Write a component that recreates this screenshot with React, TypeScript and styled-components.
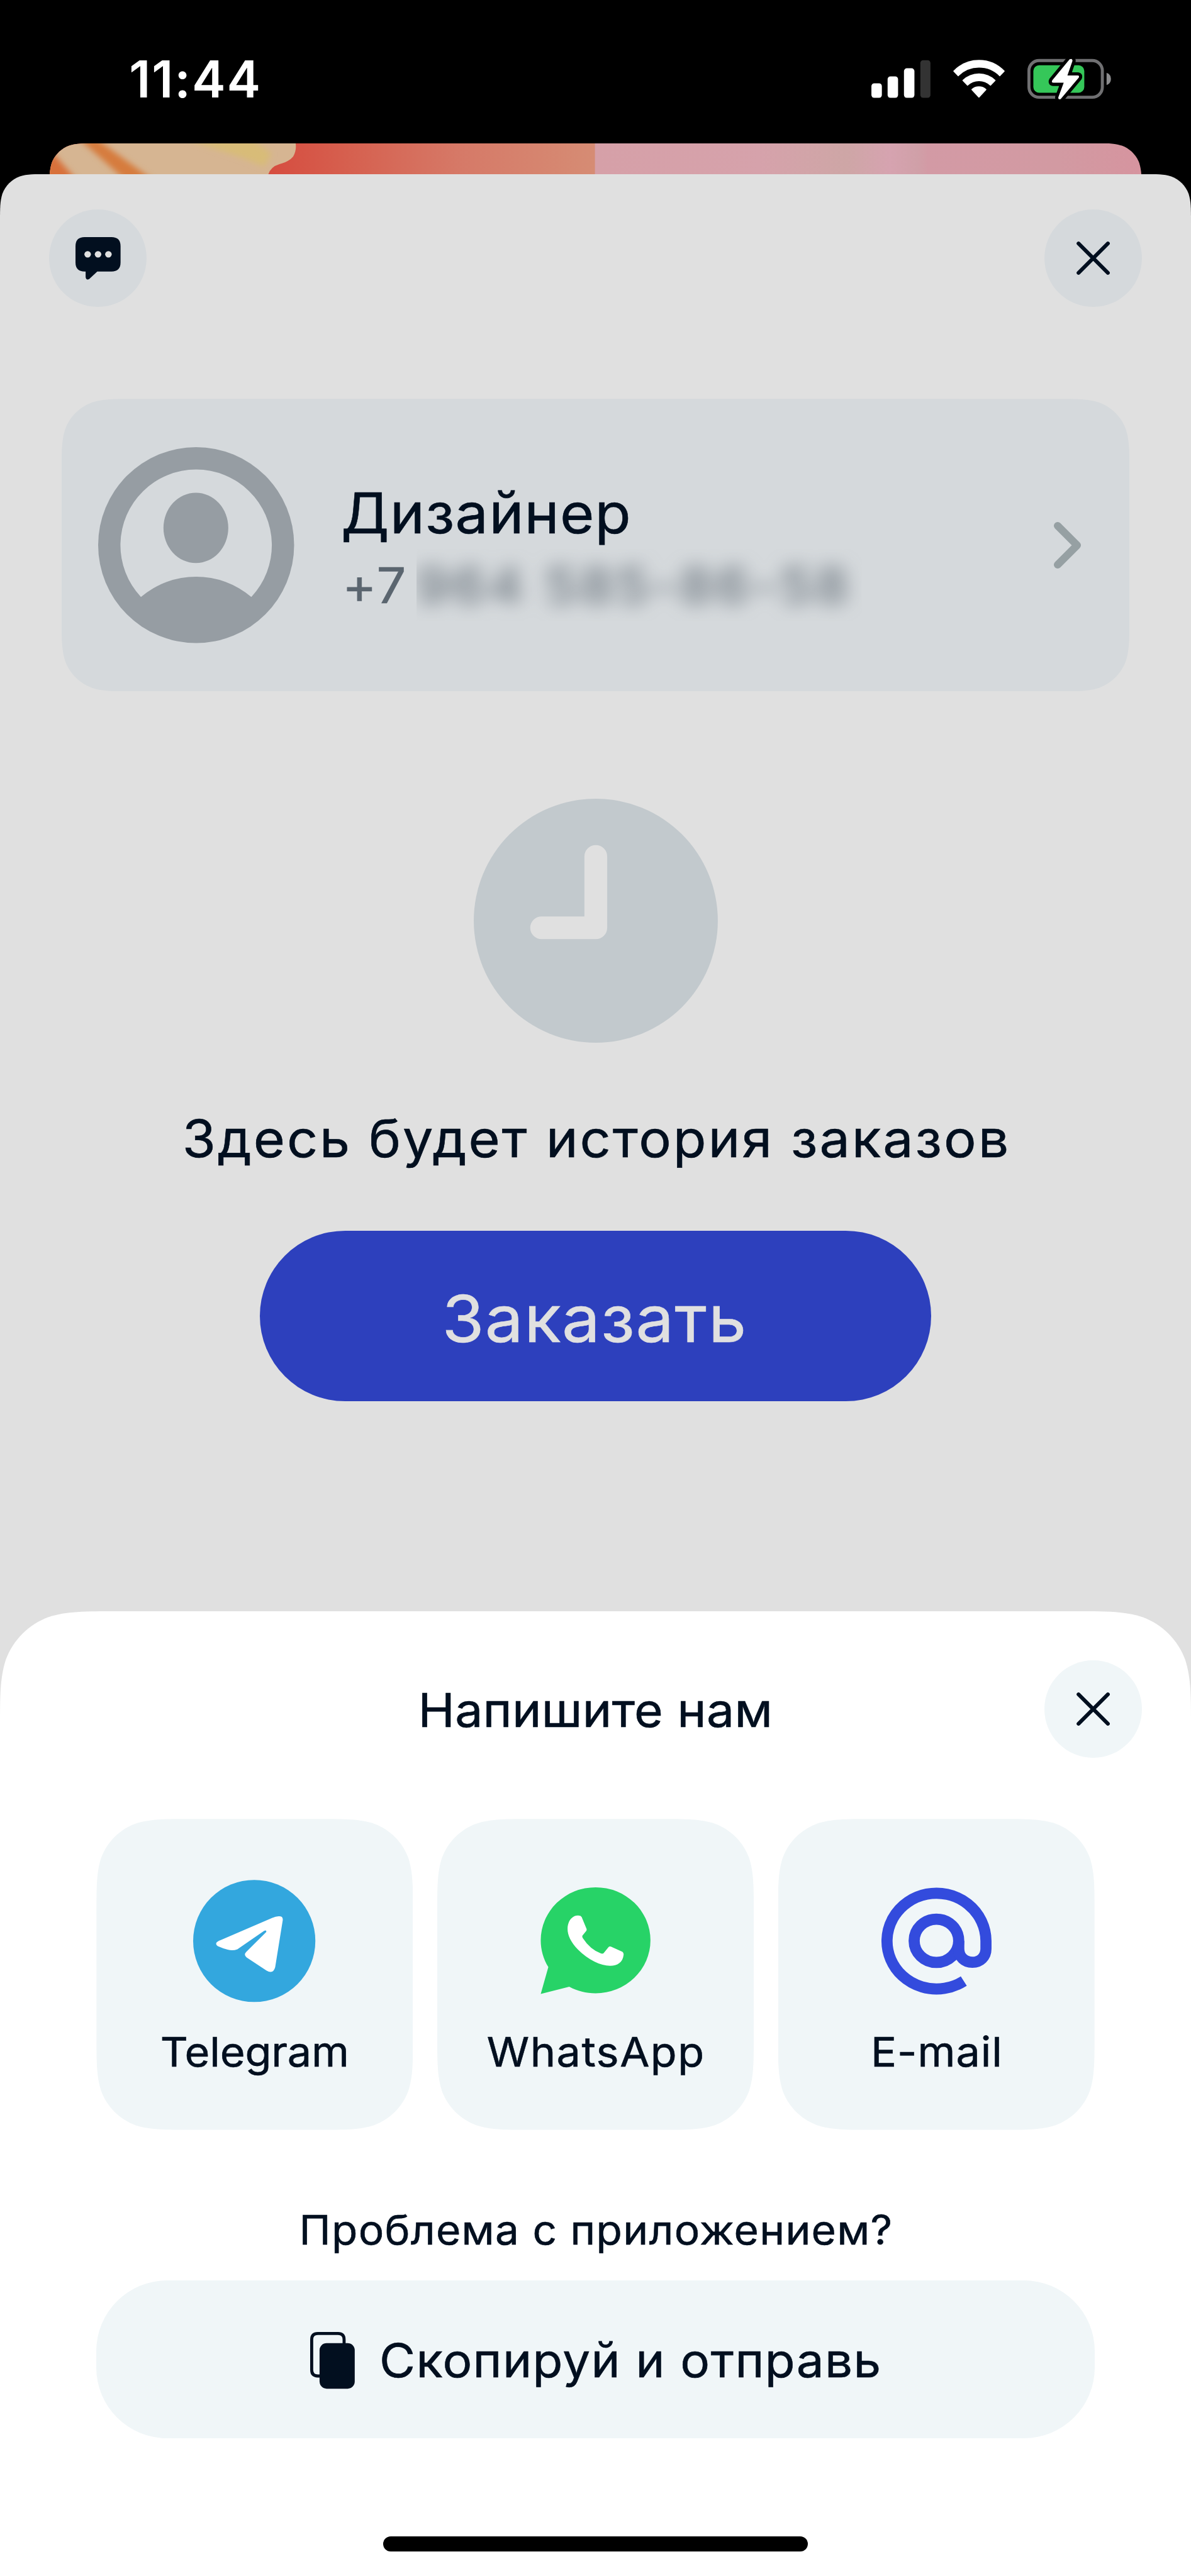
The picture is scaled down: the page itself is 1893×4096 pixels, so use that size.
import React from "react";
import styled, { createGlobalStyle } from "styled-components";

/* The layout is drawn on a 2352-unit-wide artboard and scaled to the viewport. */
const SCALE = 1893 / 2352;
const n = (v: number) => +(v * SCALE).toFixed(2);
const u = (v: number) => `${n(v)}px`;

const ink = "#020f1f";
const muted = "#5a656f";
const tint = "#f0f6f8";
const tintDim = "#d5d9dc";
const dim = "#e0e0e0";

/* Continuous-corner outline; only the top corners are rounded when `open` is set. */
const smooth = (w: number, h: number, r: number, open = false) => {
  const W = n(w);
  const H = n(h);
  const R = n(r);
  const [a, b, c, d, e, f, g] = [1.528665, 1.088493, 0.868407, 0.631494, 0.372824, 0.16906, 0.074911].map((q) => q * R);
  const top = `M${a} 0 L${W - a} 0 C${W - b} 0 ${W - c} 0 ${W - d} ${g} C${W - e} ${f} ${W - f} ${e} ${W - g} ${d} C${W} ${c} ${W} ${b} ${W} ${a}`;
  const bottom = open
    ? `L${W} ${H} L0 ${H}`
    : `L${W} ${H - a} C${W} ${H - b} ${W} ${H - c} ${W - g} ${H - d} C${W - f} ${H - e} ${W - e} ${H - f} ${W - d} ${H - g} C${W - c} ${H} ${W - b} ${H} ${W - a} ${H} L${a} ${H} C${b} ${H} ${c} ${H} ${d} ${H - g} C${e} ${H - f} ${f} ${H - e} ${g} ${H - d} C0 ${H - c} 0 ${H - b} 0 ${H - a}`;
  return `path("${top} ${bottom} L0 ${a} C0 ${b} 0 ${c} ${g} ${d} C${f} ${e} ${e} ${f} ${d} ${g} C${c} 0 ${b} 0 ${a} 0 Z")`;
};

const Global = createGlobalStyle`
  * { box-sizing: border-box; }
  html, body { margin: 0; padding: 0; background: #000; }
  body { font-family: "Inter", "Noto Sans", sans-serif; color: ${ink}; }
  button { font: inherit; color: inherit; border: 0; padding: 0; margin: 0; background: none; }
  svg { display: block; flex: none; overflow: visible; }
`;

const Screen = styled.div`
  display: flex;
  flex-direction: column;
  width: 1893px;
  height: 4096px;
  overflow: hidden;
  background: #000;
`;

const StatusBar = styled.div`
  flex: none;
  display: flex;
  align-items: center;
  justify-content: space-between;
  height: ${u(283)};
  padding: ${u(30)} ${u(158.3)} 0 ${u(255)};
`;

const Time = styled.time`
  font-size: ${u(100)};
  line-height: ${u(120)};
  font-weight: 600;
  letter-spacing: ${u(2.5)};
  color: #fff;
`;

const StatusIcons = styled.div`
  display: flex;
  align-items: center;
  gap: ${u(44.7)};
`;

/* Interface copy is set slightly extended. */
const Text = styled.span<{ $size: number; $line: number; $track?: number; $color?: string; $left?: boolean }>`
  display: block;
  flex: none;
  white-space: pre;
  font-size: ${(p) => u(p.$size)};
  line-height: ${(p) => u(p.$line)};
  letter-spacing: ${(p) => u(p.$track ?? 0)};
  margin-right: ${(p) => u(-(p.$track ?? 0))};
  color: ${(p) => p.$color ?? ink};
  -webkit-text-stroke: 0.6px ${(p) => p.$color ?? ink};
  transform: scaleX(1.05);
  transform-origin: ${(p) => (p.$left ? "left" : "center")} center;
`;

const Peek = styled.div`
  flex: none;
  height: ${u(61)};
  margin: 0 ${u(97.5)};
  overflow: hidden;
  clip-path: ${smooth(2157, 100, 62, true)};
`;

const Sheet = styled.main`
  flex: 1;
  display: flex;
  flex-direction: column;
  background: ${dim};
  clip-path: ${smooth(2352, 4760, 62, true)};
`;

const SheetHeader = styled.header`
  display: flex;
  justify-content: space-between;
  padding: ${u(70)} ${u(97)} 0;
`;

const RoundButton = styled.button<{ $dim?: boolean }>`
  display: flex;
  align-items: center;
  justify-content: center;
  width: ${u(192)};
  height: ${u(192)};
  border-radius: 50%;
  background: ${(p) => (p.$dim ? tintDim : tint)};
`;

const ProfileCard = styled.section`
  display: flex;
  align-items: center;
  width: ${u(2109)};
  height: ${u(578)};
  margin: ${u(182)} auto 0;
  padding: 0 ${u(95)} 0 ${u(72)};
  background: ${tintDim};
  clip-path: ${smooth(2109, 578, 95)};
`;

const ProfileText = styled.div`
  flex: 1;
  display: flex;
  flex-direction: column;
  align-items: flex-start;
  padding: ${u(15)} 0 0 ${u(93)};
`;

const PhoneRow = styled.div`
  display: flex;
  padding-left: ${u(2)};
`;

const HiddenDigits = styled.div`
  width: ${u(880)};
  height: ${u(143)};
  margin-left: ${u(27)};
  overflow: hidden;
  filter: opacity(0.95);

  ${Text} {
    filter: blur(${u(18)});
  }
`;

const Empty = styled.section`
  display: flex;
  flex-direction: column;
  align-items: center;
  padding-top: ${u(212)};
`;

const EmptyTitle = styled.div`
  margin-top: ${u(119)};
`;

const OrderButton = styled.button`
  display: flex;
  align-items: center;
  justify-content: center;
  width: ${u(1326)};
  height: ${u(337.5)};
  margin-top: ${u(111)};
  padding: ${u(12)} ${u(4)} 0 0;
  border-radius: ${u(169)};
  background: #2d40bd;
`;

const ContactSheet = styled.section`
  flex: none;
  display: flex;
  flex-direction: column;
  align-items: center;
  width: ${u(2352)};
  height: ${u(1906)};
  margin-top: auto;
  background: #fff;
  clip-path: ${smooth(2352, 1910, 152, true)};
`;

const ContactHeader = styled.header`
  display: grid;
  grid-template-columns: ${u(192)} 1fr ${u(192)};
  align-items: center;
  justify-items: center;
  width: 100%;
  padding: ${u(97)} ${u(97)} 0;
`;

const ContactTitle = styled.div`
  grid-column: 2;
  padding-top: ${u(5)};
`;

const Tiles = styled.div`
  display: grid;
  grid-template-columns: repeat(3, ${u(625)});
  gap: ${u(48)};
  margin-top: ${u(121.5)};
`;

const Tile = styled.button`
  display: flex;
  flex-direction: column;
  align-items: center;
  height: ${u(614)};
  padding-top: ${u(120)};
  gap: ${u(48.5)};
  background: ${tint};
  clip-path: ${smooth(625, 614, 122)};
`;

const Problem = styled.div`
  margin-top: ${u(138.5)};
`;

const CopyButton = styled.button`
  display: flex;
  align-items: center;
  justify-content: center;
  gap: ${u(73)};
  width: ${u(1972)};
  height: ${u(312)};
  margin-top: ${u(38.5)};
  padding: ${u(6)} ${u(23)} 0 0;
  border-radius: ${u(140)};
  background: ${tint};
`;

const HomeIndicator = styled.div`
  width: ${u(839)};
  height: ${u(30)};
  margin-top: ${u(194)};
  border-radius: ${u(15)};
  background: #000;
`;

const Signal = () => (
  <svg viewBox="62 346 350 244" width={n(116.7)} height={n(81.3)}>
    <rect x="62" y="493" width="62" height="86" rx="17" fill="#fff" />
    <rect x="158" y="452" width="62" height="127" rx="17" fill="#fff" />
    <rect x="255" y="404" width="62" height="175" rx="17" fill="#fff" />
    <rect x="352" y="356" width="60" height="223" rx="17" fill="#333" />
  </svg>
);

const Wifi = () => (
  <svg viewBox="546 346 306 244" width={n(102)} height={n(81.3)}>
    <g fill="#fff" stroke="#fff" strokeWidth="6" strokeLinejoin="round">
      <path d="M550 421A206 206 0 0 1 848 421L822 448A175 175 0 0 0 576 448Z" />
      <path d="M604 476A136 136 0 0 1 794 476L767 504A99 99 0 0 0 631 504Z" />
      <path d="M657 530A62 62 0 0 1 740 530L698.500 575Z" />
    </g>
  </svg>
);

const Battery = () => (
  <svg viewBox="986 346 495 244" width={n(165)} height={n(81.3)}>
    <rect x="995" y="358" width="435" height="218" rx="60" fill="none" stroke="#707072" strokeWidth="18" />
    <path d="M1455 431Q1481 441 1481 467.500Q1481 494 1455 504Z" fill="#8c8c8e" />
    <rect x="1021" y="386" width="302" height="163" rx="34" fill="#35c759" />
    <path
      d="M1236 351L1133 476Q1126 490 1140 490L1201 490L1169 576Q1168 591 1183 587L1290 460Q1296 447 1283 447L1223 447L1253 360Q1252 343 1236 351Z"
      fill="#fff"
      stroke="#000"
      strokeWidth="38"
      strokeLinejoin="round"
      paintOrder="stroke"
    />
  </svg>
);

const PeekArt = () => (
  <svg viewBox="0 0 2157 61" width={n(2157)} height={n(61)} preserveAspectRatio="none">
    <defs>
      <linearGradient id="coral" x1="430" x2="1078" y1="0" y2="0" gradientUnits="userSpaceOnUse">
        <stop offset="0" stopColor="#d64c3f" />
        <stop offset="0.25" stopColor="#d6604f" />
        <stop offset="0.6" stopColor="#d67a68" />
        <stop offset="1" stopColor="#d68c74" />
      </linearGradient>
      <linearGradient id="pink" x1="1078" x2="2157" y1="0" y2="0" gradientUnits="userSpaceOnUse">
        <stop offset="0" stopColor="#d6a0a8" />
        <stop offset="0.3" stopColor="#d6a2ab" />
        <stop offset="0.46" stopColor="#cea6a6" />
        <stop offset="0.54" stopColor="#d6a3b0" />
        <stop offset="0.59" stopColor="#d0a0a8" />
        <stop offset="0.61" stopColor="#d39aa5" />
        <stop offset="0.85" stopColor="#d29aa2" />
        <stop offset="1" stopColor="#d6949f" />
      </linearGradient>
      <filter id="soft" x="-20%" y="-50%" width="140%" height="200%">
        <feGaussianBlur stdDeviation="6" />
      </filter>
    </defs>
    <rect width="1079" height="61" fill="url(#coral)" />
    <path d="M0 0H487Q489 14 482 26Q474 36 455 41Q438 46 433 61H0Z" fill="#d6b592" />
    <g filter="url(#soft)">
      <path d="M58 -10H92L205 72H150Z" fill="#d67c3c" />
      <path d="M-12 8L12 24L56 74H-12Z" fill="#d8713a" />
      <path d="M270 -8H400L440 20L425 46L380 28Z" fill="#d8bc78" />
    </g>
    <rect x="1078" width="1079" height="61" fill="url(#pink)" />
  </svg>
);

const ChatIcon = () => (
  <svg viewBox="0 0 89 84" width={n(89)} height={n(84)}>
    <path d="M18 0H71Q89 0 89 18V50Q89 68 71 68H43L27 83Q21 86 20 79V68H18Q0 68 0 50V18Q0 0 18 0Z" fill={ink} />
    <circle cx="24" cy="34" r="6.500" fill={dim} />
    <circle cx="44.500" cy="34" r="6.500" fill={dim} />
    <circle cx="65" cy="34" r="6.500" fill={dim} />
  </svg>
);

const CloseIcon = () => (
  <svg viewBox="0 0 66 66" width={n(66)} height={n(66)}>
    <path d="M4 4L62 62M62 4L4 62" stroke={ink} strokeWidth="7.500" strokeLinecap="round" />
  </svg>
);

const Avatar = () => (
  <svg viewBox="0 0 387 387" width={n(387)} height={n(387)}>
    <circle cx="193.500" cy="193.500" r="193.500" fill="#969da3" />
    <path d="M84.500 296A149.500 149.500 0 1 1 302.500 296A168 168 0 0 0 84.500 296Z" fill={tintDim} />
    <ellipse cx="193" cy="159.500" rx="64" ry="69.500" fill="#969da3" />
  </svg>
);

const Chevron = () => (
  <svg viewBox="0 0 54 92" width={n(54)} height={n(92)}>
    <path
      d="M7.500 7.500L46 46L7.500 84.500"
      fill="none"
      stroke="#96a0a3"
      strokeWidth="15"
      strokeLinecap="round"
      strokeLinejoin="round"
    />
  </svg>
);

const Clock = () => (
  <svg viewBox="0 0 482 482" width={n(482)} height={n(482)}>
    <circle cx="241" cy="241" r="241" fill="#c2c9cd" />
    <path
      d="M218.500 114A22.500 22.500 0 0 1 263.500 114V255A22.500 22.500 0 0 1 241 277.500H134A22.500 22.500 0 0 1 134 232.500H218.500Z"
      fill={dim}
    />
  </svg>
);

const TelegramIcon = () => (
  <svg viewBox="66 43.5 726 726" width={n(242)} height={n(242)}>
    <circle cx="428" cy="406" r="362" fill="#33a7de" />
    <path
      d="M203 418Q199 429 212 437Q240 450 270 457Q300 466 328 455L486 346Q502 338 499 353L381 470Q363 488 383 504L500 581Q540 605 552 562L597 282Q599 257 572 260Q555 262 535 269L228 401Q207 409 203 418Z"
      fill="#fff"
    />
  </svg>
);

const WhatsAppIcon = () => (
  <svg viewBox="45 43.5 726 726" width={n(242)} height={n(242)}>
    <path d="M84 720L129 561C100 514 84 458 84 402A325 314 0 1 1 409 716C353 716 300 702 253 677Z" fill="#27d367" />
    <path
      d="M243 335C243 285 273 255 303 255Q320 254 326 263L355 333Q358 341 353 347L331 374Q328 381 334 390Q376 455 440 480Q450 484 457 478L485 443Q490 437 500 440L568 470Q576 476 575 488C570 534 538 553 495 553C440 553 365 518 303 455C262 412 243 372 243 335Z"
      fill="#fff"
    />
  </svg>
);

const MailIcon = () => (
  <svg viewBox="-0.5 0 242 242" width={n(242)} height={n(242)}>
    <g fill="none" stroke="#334bdd" strokeWidth="22">
      <ellipse cx="120.500" cy="120.500" rx="44" ry="42.800" />
      <path d="M174.500 200A97.700 94.600 0 1 1 218.300 120.700V136.500C218.300 152 207 163 191.500 163S164.600 152 164.600 136V120.700" />
    </g>
  </svg>
);

const CopyIcon = () => (
  <svg viewBox="0 0 88 112" width={n(88)} height={n(112)}>
    <path d="M19 87H15Q3 87 3 75V15Q3 3 15 3H55Q67 3 67 15V24" fill="none" stroke={ink} strokeWidth="6" />
    <rect x="18.500" y="22" width="69.500" height="90" rx="14" fill={ink} />
  </svg>
);

const contacts = [
  { label: "Telegram", track: -0.2, Icon: TelegramIcon },
  { label: "WhatsApp", track: 1.7, Icon: WhatsAppIcon },
  { label: "E-mail", track: 1.1, Icon: MailIcon },
];

export default function App() {
  return (
    <>
      <Global />
      <Screen>
        <StatusBar>
          <Time>11:44</Time>
          <StatusIcons>
            <Signal />
            <Wifi />
            <Battery />
          </StatusIcons>
        </StatusBar>
        <Peek>
          <PeekArt />
        </Peek>
        <Sheet>
          <SheetHeader>
            <RoundButton $dim aria-label="Чат">
              <ChatIcon />
            </RoundButton>
            <RoundButton $dim aria-label="Закрыть">
              <CloseIcon />
            </RoundButton>
          </SheetHeader>
          <ProfileCard>
            <Avatar />
            <ProfileText>
              <Text $left $size={110.7} $line={143} $track={1.3}>Дизайнер</Text>
              <PhoneRow>
                <Text $left $size={98} $line={143} $track={2} $color={muted}>+7</Text>
                <HiddenDigits>
                  <Text $left $size={98} $line={143} $track={7.3} $color={muted}>964 585-86-58</Text>
                </HiddenDigits>
              </PhoneRow>
            </ProfileText>
            <Chevron />
          </ProfileCard>
          <Empty>
            <Clock />
            <EmptyTitle>
              <Text $size={102} $line={141} $track={3.4}>Здесь будет история заказов</Text>
            </EmptyTitle>
            <OrderButton>
              <Text $size={128.6} $line={160} $track={1.4} $color={dim}>Заказать</Text>
            </OrderButton>
          </Empty>
          <ContactSheet>
            <ContactHeader>
              <ContactTitle>
                <Text $size={93} $line={120} $track={0.3}>Напишите нам</Text>
              </ContactTitle>
              <RoundButton aria-label="Закрыть">
                <CloseIcon />
              </RoundButton>
            </ContactHeader>
            <Tiles>
              {contacts.map(({ label, track, Icon }) => (
                <Tile key={label}>
                  <Icon />
                  <Text $size={81} $line={100} $track={track}>{label}</Text>
                </Tile>
              ))}
            </Tiles>
            <Problem>
              <Text $size={80} $line={120} $track={1.5}>Проблема с приложением?</Text>
            </Problem>
            <CopyButton>
              <CopyIcon />
              <Text $size={92.5} $line={120} $track={1.6}>Скопируй и отправь</Text>
            </CopyButton>
            <HomeIndicator />
          </ContactSheet>
        </Sheet>
      </Screen>
    </>
  );
}
